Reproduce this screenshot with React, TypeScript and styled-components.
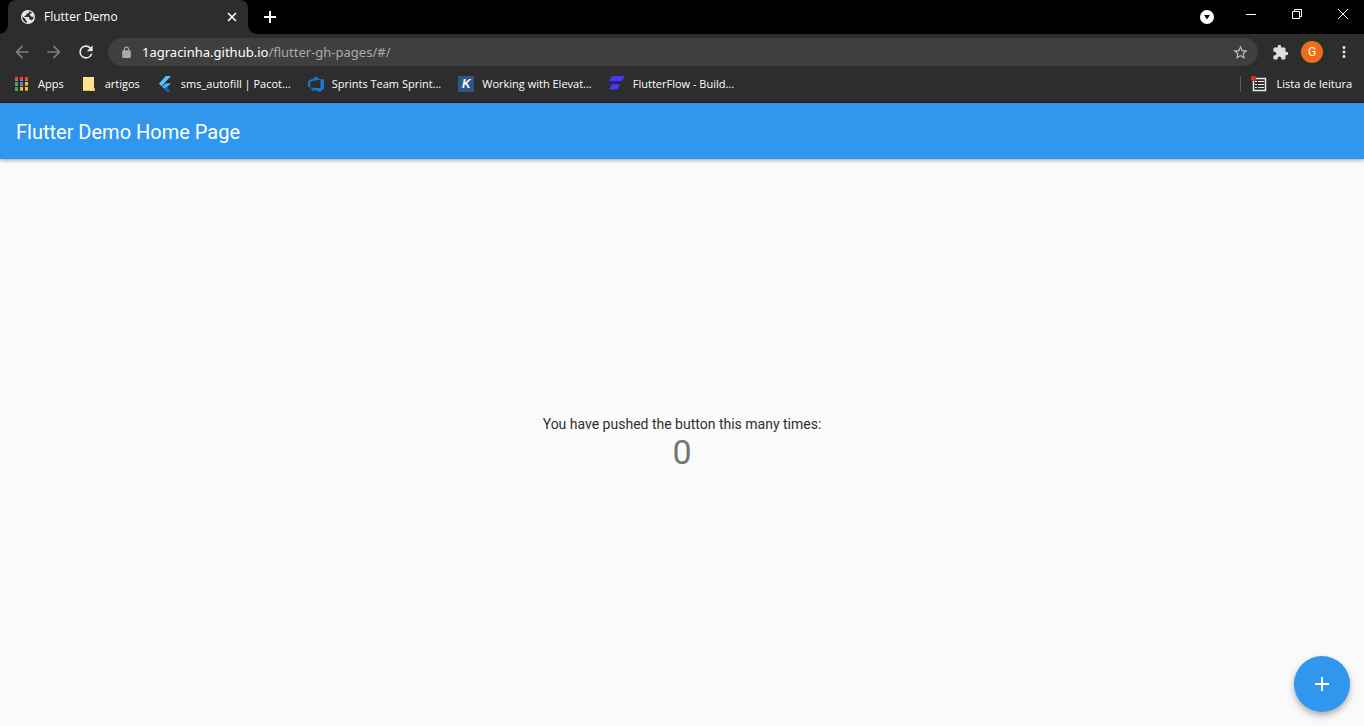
import React, { useState } from "react";
import styled, { createGlobalStyle } from "styled-components";

const GlobalStyle = createGlobalStyle`
  *, *::before, *::after { box-sizing: border-box; }
  body { margin: 0; background: #fafafa; }
  button, input { font: inherit; }
`;

const uiFont = `"Open Sans", "Noto Sans", sans-serif`;

const Window = styled.div`
  display: flex;
  flex-direction: column;
  min-height: 100vh;
  font-family: ${uiFont};
  font-size: 12px;
  line-height: 16px;
  color: #fff;
`;

const TabStrip = styled.header`
  display: flex;
  align-items: stretch;
  height: 34px;
  padding-left: 8px;
  background: #000;
`;

const Tab = styled.div`
  position: relative;
  display: flex;
  align-items: center;
  gap: 8px;
  width: 240px;
  padding: 0 8px 0 12px;
  border-radius: 8px 8px 0 0;
  background: #2d2d2d;

  &::before,
  &::after {
    content: "";
    position: absolute;
    bottom: 0;
    width: 8px;
    height: 8px;
  }
  &::before {
    right: 100%;
    background: radial-gradient(circle at 0 0, #000 7px, #2d2d2d 8px);
  }
  &::after {
    left: 100%;
    background: radial-gradient(circle at 100% 0, #000 7px, #2d2d2d 8px);
  }
`;

const TabTitle = styled.span`
  flex: 1;
  white-space: nowrap;
`;

const IconButton = styled.button<{ $size?: number; $color?: string }>`
  display: flex;
  align-items: center;
  justify-content: center;
  flex: none;
  width: ${(p) => p.$size ?? 16}px;
  height: ${(p) => p.$size ?? 16}px;
  padding: 0;
  border: 0;
  background: none;
  color: ${(p) => p.$color ?? "#fff"};
  cursor: pointer;
`;

const NewTab = styled(IconButton)`
  align-self: center;
  margin-left: 8px;
`;

const WindowControls = styled.div`
  display: flex;
  gap: 4px;
  margin-left: auto;
`;

const WindowButton = styled(IconButton)`
  width: 42px;
  height: 28px;
`;

const TabSearch = styled(IconButton)`
  width: 38px;
  height: 34px;
`;

const Toolbar = styled.nav`
  display: flex;
  align-items: center;
  height: 36px;
  padding: 0 9px 0 12px;
  background: #2d2d2d;
`;

const NavButtons = styled.div`
  display: flex;
  gap: 12px;
  margin-right: 12px;
`;

const AddressBar = styled.div`
  display: flex;
  align-items: center;
  flex: 1;
  height: 28px;
  padding: 0 8px 0 10px;
  border-radius: 14px;
  background: #3f3f3f;
`;

const Url = styled.div`
  flex: 1;
  margin-left: 8px;
  font-family: "Noto Sans", sans-serif;
  font-size: 13px;
  line-height: 20px;
  color: #a9abad;
  white-space: nowrap;
`;

const Host = styled.span`
  color: #fff;
`;

const ToolbarActions = styled.div`
  display: flex;
  align-items: center;
  gap: 10px;
  margin-left: 11px;
`;

const Avatar = styled.button`
  width: 22px;
  height: 22px;
  padding: 0;
  border: 0;
  border-radius: 50%;
  background: #ef6c1a;
  color: #fff;
  font-family: Roboto, sans-serif;
  font-size: 12px;
  line-height: 22px;
  text-align: center;
`;

const BookmarkBar = styled.nav`
  display: flex;
  align-items: center;
  gap: 17px;
  height: 33px;
  padding: 0 12px 4px 14px;
  border-bottom: 1px solid #1f1f1f;
  background: #2d2d2d;
  font-size: 11px;
`;

const Bookmark = styled.a`
  display: flex;
  align-items: center;
  gap: 8px;
  color: #fff;
  text-decoration: none;
  white-space: nowrap;
`;

const ReadingList = styled.button`
  display: flex;
  align-items: center;
  gap: 10px;
  margin-left: auto;
  padding: 0 0 0 10px;
  border: 0;
  border-left: 1px solid #5c5e60;
  background: none;
  color: #fff;
  line-height: 16px;
  white-space: nowrap;
`;

const AppBar = styled.header`
  position: relative;
  z-index: 1;
  display: flex;
  align-items: center;
  height: 56px;
  padding: 2px 16px 0;
  background: #3196ee;
  box-shadow: 0 1px 4px rgba(0, 0, 0, 0.4);
`;

const AppTitle = styled.h1`
  margin: 0;
  font-family: Roboto, sans-serif;
  font-size: 20px;
  font-weight: 400;
  line-height: 24px;
`;

const Body = styled.main`
  position: relative;
  display: flex;
  flex: 1;
  flex-direction: column;
  align-items: center;
  justify-content: center;
  padding-top: 2px;
  background: #fafafa;
  font-family: Roboto, sans-serif;
`;

const Message = styled.p`
  margin: 0;
  font-size: 14px;
  line-height: 16px;
  color: #303030;
`;

const Counter = styled.output`
  font-size: 34px;
  line-height: 40px;
  color: #757575;
`;

const FloatingButton = styled.button`
  position: absolute;
  right: 14px;
  bottom: 14px;
  display: flex;
  align-items: center;
  justify-content: center;
  width: 56px;
  height: 56px;
  padding: 0;
  border: 0;
  border-radius: 50%;
  background: #3196ee;
  color: #fff;
  box-shadow: 0 3px 5px rgba(0, 0, 0, 0.2), 0 4px 10px rgba(0, 0, 0, 0.14);
  cursor: pointer;
`;

const Glyph = ({ d, size = 20, fill = "currentColor" }: { d: string; size?: number; fill?: string }) => (
  <svg width={size} height={size} viewBox="0 0 24 24" fill={fill} aria-hidden="true">
    <path d={d} />
  </svg>
);

const paths = {
  back: "M20 11H7.83l5.59-5.59L12 4l-8 8 8 8 1.41-1.41L7.83 13H20v-2z",
  forward: "M12 4l-1.41 1.41L16.17 11H4v2h12.17l-5.58 5.59L12 20l8-8z",
  reload:
    "M17.65 6.35A7.96 7.96 0 0 0 12 4a8 8 0 1 0 7.73 10h-2.08A6 6 0 1 1 12 6c1.66 0 3.14.69 4.22 1.78L13 11h7V4l-2.35 2.35z",
  lock: "M18 8h-1V6c0-2.76-2.24-5-5-5S7 3.240 7 6v2H6c-1.100 0-2 .900-2 2v10c0 1.100.900 2 2 2h12c1.100 0 2-.900 2-2V10c0-1.100-.900-2-2-2zM9 6c0-1.660 1.340-3 3-3s3 1.340 3 3v2H9V6z",
  star: "M22 9.240l-7.190-.620L12 2 9.190 8.630 2 9.240l5.460 4.730L5.820 21 12 17.270 18.180 21l-1.630-7.030L22 9.240zM12 15.400l-3.760 2.270 1-4.280-3.320-2.880 4.380-.380L12 6.100l1.710 4.040 4.380.380-3.320 2.880 1 4.280L12 15.400z",
  puzzle:
    "M20.500 11H19V7c0-1.100-.900-2-2-2h-4V3.500a2.500 2.500 0 0 0-5 0V5H4c-1.100 0-1.990.900-1.990 2v3.800H3.500c1.490 0 2.700 1.210 2.700 2.700s-1.210 2.700-2.700 2.700H2V20c0 1.100.900 2 2 2h3.800v-1.500c0-1.490 1.210-2.700 2.700-2.700s2.700 1.210 2.700 2.700V22H17c1.100 0 2-.900 2-2v-4h1.500a2.500 2.500 0 0 0 0-5z",
  more: "M12 8c1.100 0 2-.900 2-2s-.900-2-2-2-2 .900-2 2 .900 2 2 2zm0 2c-1.100 0-2 .900-2 2s.900 2 2 2 2-.900 2-2-.900-2-2-2zm0 6c-1.100 0-2 .900-2 2s.900 2 2 2 2-.900 2-2-.900-2-2-2z",
  plus: "M19 13h-6v6h-2v-6H5v-2h6V5h2v6h6v2z",
};

const GlobeIcon = () => (
  <svg width="16" height="16" viewBox="0 0 16 16" aria-hidden="true">
    <circle cx="8" cy="8" r="7" fill="#e8eaed" />
    <path
      d="M9 2.200v1c0 .800-.600 1.300-1.400 1.300H6.400v1.300c0 .500-.400.900-.900.900H4.400V8h4c.500 0 .900.400.900.900v1.500h1c.700 0 1.200.400 1.400 1 1.300-1 2.100-2.500 2.100-3.800-1 .600-2.200.400-2.800-.300L9.800 6.100V4.700h1.500l.6-1C11 2.900 10 2.400 9 2.200zM2.300 7.400C2 9.700 3.700 13.200 7 13.700v-1.500c-.8 0-1.400-.6-1.400-1.400V10L2.300 7.400z"
      fill="#2d2d2d"
    />
  </svg>
);

const AppsIcon = () => {
  const colors = ["#f44336", "#f44336", "#f44336", "#34a853", "#4285f4", "#fbbc05", "#34a853", "#fbbc05", "#fbbc05"];
  return (
    <svg width="16" height="16" viewBox="0 0 16 16" shapeRendering="crispEdges" aria-hidden="true">
      {colors.map((c, i) => (
        <g key={i}>
          <rect x={1 + (i % 3) * 5} y={1 + Math.floor(i / 3) * 5} width="3" height="4" fill="#8a8a8a" />
          <rect x={1 + (i % 3) * 5} y={1 + Math.floor(i / 3) * 5} width="3" height="3" fill={c} />
        </g>
      ))}
    </svg>
  );
};

const FolderIcon = () => (
  <svg width="16" height="16" viewBox="0 0 16 16" aria-hidden="true">
    <path d="M2 1h11v11h1v3H2z" fill="#fde293" />
    <path d="M2 14h8v1H2zM12 11h1v1h1v3h-3v-1h2v-1h-1z" fill="#e8bf4e" />
  </svg>
);

const FlutterIcon = () => (
  <svg width="16" height="16" viewBox="0 0 16 16" aria-hidden="true">
    <path d="M9 0h5L4.500 10.200 2 7.600z" fill="#54c5f8" />
    <path d="M9 7.300h5l-4 4-2.600 1.700-2.500-2.400z" fill="#45b6f3" />
    <path d="M7.200 13l2.600-2.500L14 15.900H9.500z" fill="#175ea3" />
  </svg>
);

const AzureIcon = () => (
  <svg width="16" height="16" viewBox="0 0 16 16" aria-hidden="true">
    <path
      d="M16 3v9.400L12 16l-6.200-2.300V16l-3.500-4.600 10.200.800V3.500L16 3zM12.600 3.500L6.800 0v2.300L1.500 3.900 0 5.900v4.600l2.300 1V5.600l10.300-2.100z"
      fill="#1976d2"
    />
  </svg>
);

const LetterTile = styled.span`
  width: 16px;
  height: 16px;
  background: #2c5788;
  color: #fff;
  font-family: "Liberation Sans", Arial, sans-serif;
  font-size: 12px;
  font-style: italic;
  font-weight: 700;
  line-height: 16px;
  text-align: center;
`;

const FlutterFlowIcon = () => (
  <svg width="16" height="16" viewBox="0 0 16 16" aria-hidden="true">
    <path d="M.5 5h11l-2 2.500H.8zM.5 13h3L2.500 15H1z" fill="#2a1d91" />
    <path d="M3.300 0H16l-3 5H0z" fill="#4b39ef" />
    <path d="M3 8.300h8.300l-2.800 5H0z" fill="#4b39ef" />
  </svg>
);

const ReadingListIcon = () => (
  <svg width="16" height="16" viewBox="0 0 16 16" aria-hidden="true">
    <g fill="none" stroke="#e8eaed">
      <path d="M2.500 2.500h12v12h-12z" strokeWidth="1.500" />
      <path d="M4 5.500h2M7 5.500h6M4 8.500h2M7 8.500h6M4 11.500h2M7 11.500h6" />
    </g>
    <circle cx="2.500" cy="2.500" r="2.700" fill="#d93025" />
  </svg>
);

const bookmarks = [
  { label: "Apps", icon: <AppsIcon /> },
  { label: "artigos", icon: <FolderIcon /> },
  { label: "sms_autofill | Pacot...", icon: <FlutterIcon /> },
  { label: "Sprints Team Sprint...", icon: <AzureIcon /> },
  { label: "Working with Elevat...", icon: <LetterTile aria-hidden="true">K</LetterTile> },
  { label: "FlutterFlow - Build...", icon: <FlutterFlowIcon /> },
];

export default function App() {
  const [count, setCount] = useState(0);

  return (
    <Window>
      <GlobalStyle />
      <TabStrip>
        <Tab>
          <GlobeIcon />
          <TabTitle>Flutter Demo</TabTitle>
          <IconButton aria-label="Close tab">
            <svg width="16" height="16" viewBox="0 0 16 16" stroke="currentColor" strokeWidth="1.600">
              <path d="M4 4l8 8M12 4l-8 8" />
            </svg>
          </IconButton>
        </Tab>
        <NewTab $size={28} aria-label="New tab">
          <svg width="12" height="12" viewBox="0 0 12 12" fill="currentColor">
            <path d="M5 0h2v5h5v2H7v5H5V7H0V5h5z" />
          </svg>
        </NewTab>
        <WindowControls>
          <TabSearch aria-label="Search tabs">
            <svg width="14" height="14" viewBox="0 0 14 14">
              <circle cx="7" cy="7" r="7" fill="#fff" />
              <path d="M4 5h6L7 9.500z" fill="#000" />
            </svg>
          </TabSearch>
          <WindowButton aria-label="Minimize">
            <svg width="10" height="10" viewBox="0 0 10 10" stroke="currentColor">
              <path d="M0 5.500h10" />
            </svg>
          </WindowButton>
          <WindowButton aria-label="Restore">
            <svg width="10" height="10" viewBox="0 0 10 10" fill="none" stroke="currentColor">
              <path d="M.5 2.500h7v7h-7zM2.500 2.500v-2h7v7h-2" />
            </svg>
          </WindowButton>
          <WindowButton aria-label="Close">
            <svg width="10" height="10" viewBox="0 0 10 10" stroke="currentColor">
              <path d="M0 0l10 10M10 0L0 10" />
            </svg>
          </WindowButton>
        </WindowControls>
      </TabStrip>

      <Toolbar aria-label="Navigation">
        <NavButtons>
          <IconButton $size={20} $color="#7d7d7d" aria-label="Back">
            <Glyph d={paths.back} />
          </IconButton>
          <IconButton $size={20} $color="#7d7d7d" aria-label="Forward">
            <Glyph d={paths.forward} />
          </IconButton>
          <IconButton $size={20} $color="#e8eaed" aria-label="Reload">
            <Glyph d={paths.reload} />
          </IconButton>
        </NavButtons>
        <AddressBar>
          <IconButton $color="#a9abad" aria-label="Site information">
            <Glyph d={paths.lock} size={13} />
          </IconButton>
          <Url>
            <Host>1agracinha.github.io</Host>/flutter-gh-pages/#/
          </Url>
          <IconButton $size={20} $color="#bdbfc1" aria-label="Bookmark this page">
            <Glyph d={paths.star} size={17} />
          </IconButton>
        </AddressBar>
        <ToolbarActions>
          <IconButton $size={22} $color="#e0e0e0" aria-label="Extensions">
            <Glyph d={paths.puzzle} size={17} />
          </IconButton>
          <Avatar aria-label="Profile">G</Avatar>
          <IconButton $size={22} $color="#e0e0e0" aria-label="Menu">
            <Glyph d={paths.more} size={18} />
          </IconButton>
        </ToolbarActions>
      </Toolbar>

      <BookmarkBar aria-label="Bookmarks">
        {bookmarks.map((b) => (
          <Bookmark key={b.label} href="#">
            {b.icon}
            <span>{b.label}</span>
          </Bookmark>
        ))}
        <ReadingList>
          <ReadingListIcon />
          Lista de leitura
        </ReadingList>
      </BookmarkBar>

      <AppBar>
        <AppTitle>Flutter Demo Home Page</AppTitle>
      </AppBar>
      <Body>
        <Message>You have pushed the button this many times:</Message>
        <Counter>{count}</Counter>
        <FloatingButton aria-label="Increment" onClick={() => setCount(count + 1)}>
          <Glyph d={paths.plus} size={24} />
        </FloatingButton>
      </Body>
    </Window>
  );
}
